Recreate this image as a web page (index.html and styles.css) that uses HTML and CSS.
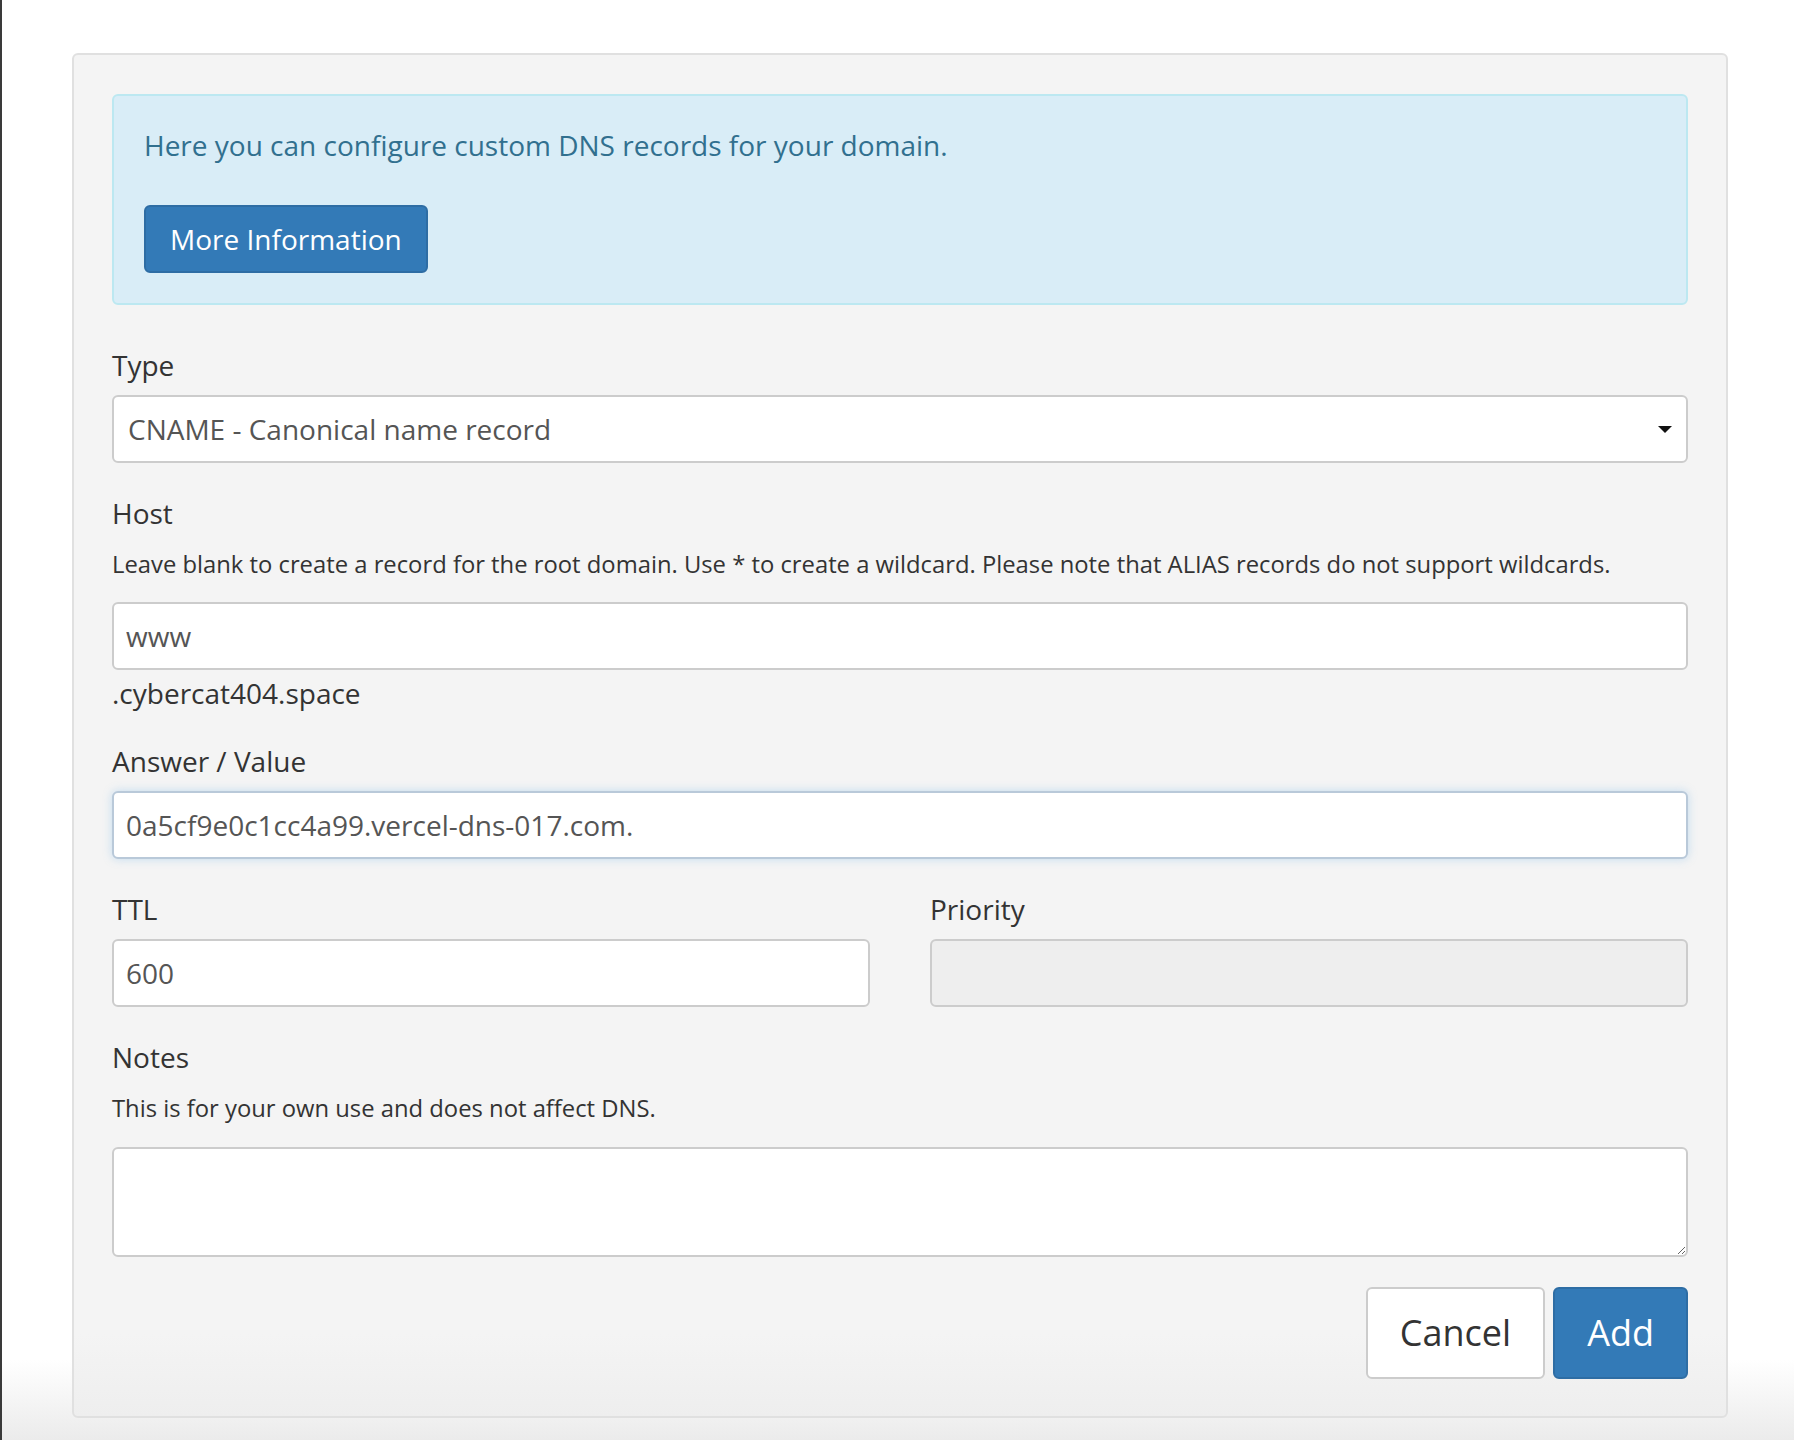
FILE: index.html
```html
<!DOCTYPE html>
<html lang="en">
<head>
    <meta charset="UTF-8">
    <meta name="viewport" content="width=device-width, initial-scale=1.0">
    <title>DNS Records</title>
    <link rel="stylesheet" href="styles.css">
</head>
<body>
    <div class="page">
        <div class="panel">
            <div class="alert-info">
                <p>Here you can configure custom DNS records for your domain.</p>
                <a class="btn btn-primary" href="#">More Information</a>
            </div>

            <form class="dns-form">
                <div class="form-group">
                    <label for="type">Type</label>
                    <div class="select-wrap">
                        <select id="type" class="form-control">
                            <option>CNAME - Canonical name record</option>
                        </select>
                    </div>
                </div>

                <div class="form-group">
                    <label for="host">Host</label>
                    <p class="help">Leave blank to create a record for the root domain. Use * to create a wildcard. Please note that ALIAS records do not support wildcards.</p>
                    <input type="text" id="host" class="form-control" value="www">
                    <div class="suffix">.cybercat404.space</div>
                </div>

                <div class="form-group">
                    <label for="answer">Answer / Value</label>
                    <input type="text" id="answer" class="form-control focused" value="0a5cf9e0c1cc4a99.vercel-dns-017.com.">
                </div>

                <div class="form-row">
                    <div class="form-group">
                        <label for="ttl">TTL</label>
                        <input type="text" id="ttl" class="form-control" value="600">
                    </div>
                    <div class="form-group">
                        <label for="priority">Priority</label>
                        <input type="text" id="priority" class="form-control" disabled>
                    </div>
                </div>

                <div class="form-group">
                    <label for="notes">Notes</label>
                    <p class="help help-notes">This is for your own use and does not affect DNS.</p>
                    <textarea id="notes" class="form-control"></textarea>
                </div>

                <div class="actions">
                    <button type="button" class="btn btn-lg btn-default">Cancel</button>
                    <button type="submit" class="btn btn-lg btn-primary">Add</button>
                </div>
            </form>
        </div>
    </div>
</body>
</html>
```

FILE: styles.css
```css
* {
    box-sizing: border-box;
}
html, body {
    margin: 0;
    min-height: 1440px;
}
body {
    font-family: "Open Sans", Arial, sans-serif;
    font-size: 28px;
    color: #333;
    background: linear-gradient(to bottom, #fff 0, #fff 1360px, #ebebeb 1440px);
}
.page {
    min-height: 1440px;
    border-left: 2px solid #3a3a3a;
    padding: 53px 0 0 70px;
}
.panel {
    width: 1656px;
    background: linear-gradient(to bottom, #f4f4f4 0, #f4f4f4 94%, #eeeeee 100%);
    border: 2px solid #e0e0e0;
    border-radius: 6px;
    padding: 39px 38px 37px 38px;
}
.alert-info {
    background-color: #d9edf7;
    border: 2px solid #bce8f1;
    border-radius: 6px;
    padding: 30px;
    margin-bottom: 40px;
}
.alert-info p {
    margin: 0 0 41px 0;
    color: #31708f;
    line-height: 38px;
}
.btn {
    display: inline-block;
    font-family: inherit;
    font-size: 28px;
    line-height: 40px;
    padding: 12px 24px;
    border: 2px solid transparent;
    border-radius: 6px;
    text-decoration: none;
    cursor: pointer;
}
.btn-primary {
    background-color: #337ab7;
    border-color: #2e6da4;
    color: #fff;
}
.btn-default {
    background-color: #fff;
    border-color: #ccc;
    color: #333;
}
.btn-lg {
    font-size: 36px;
    line-height: 48px;
    padding: 20px 32px;
}
.form-group {
    margin-bottom: 30px;
}
label {
    display: block;
    line-height: 40px;
    margin-bottom: 10px;
}
.help {
    font-size: 23.8px;
    line-height: 34px;
    margin: 14px 0 21px 0;
    color: #333;
}
.help-notes {
    margin-bottom: 22px;
}
.form-control {
    display: block;
    width: 100%;
    height: 68px;
    padding: 0 12px;
    font-family: inherit;
    font-size: 28px;
    color: #555;
    background-color: #fff;
    border: 2px solid #ccc;
    border-radius: 6px;
    outline: none;
}
.form-control.focused {
    border-color: #b9c9d9;
    box-shadow: 0 0 10px rgba(102, 175, 233, 0.35);
}
.form-control:disabled {
    background-color: #eee;
}
select.form-control {
    appearance: none;
    -webkit-appearance: none;
    padding-left: 14px;
}
.select-wrap {
    position: relative;
}
.select-wrap::after {
    content: "";
    position: absolute;
    right: 16px;
    top: 31px;
    border-left: 7px solid transparent;
    border-right: 7px solid transparent;
    border-top: 7px solid #111;
}
textarea.form-control {
    height: 110px;
    padding: 8px 12px;
    resize: vertical;
}
.suffix {
    line-height: 36px;
    margin-top: 5px;
    color: #333;
}
.form-row {
    display: grid;
    grid-template-columns: 1fr 1fr;
    column-gap: 60px;
}
.actions {
    display: flex;
    justify-content: flex-end;
    gap: 8px;
}
```
